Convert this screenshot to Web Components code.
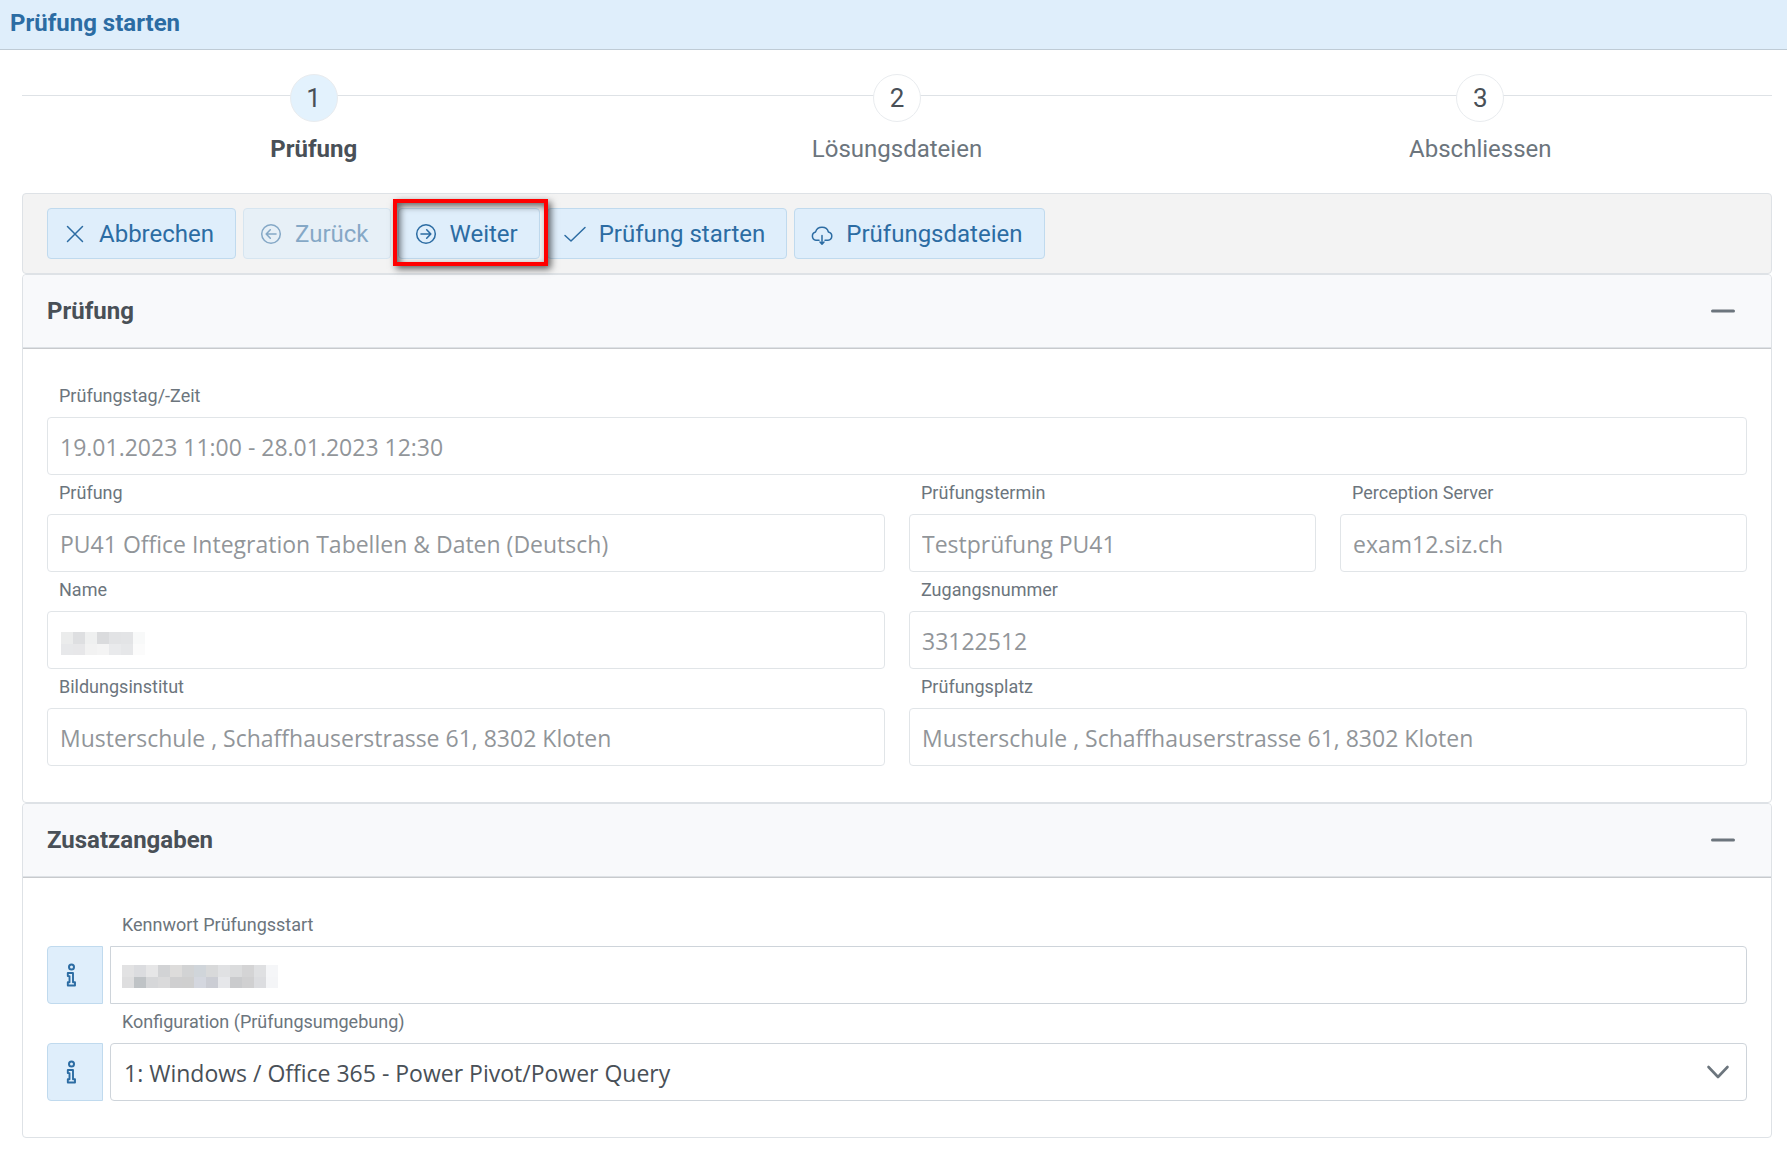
<!DOCTYPE html>
<html lang="de">
<head>
<meta charset="utf-8">
<meta name="viewport" content="width=device-width, initial-scale=1">
<title>Prüfung starten</title>
<style>
  body {
    margin: 0;
    background: #fff;
    color: #495057;
    font: 24px/28px Roboto, "Liberation Sans", sans-serif;
    --primary: #2c6ca3;
    --primary-bg: #dfeefb;
    --primary-border: #c0daee;
    --line: #dee2e6;
    --muted: #6c757d;
    --input-font: "Open Sans", "Noto Sans", sans-serif;
  }
</style>
</head>
<body>
<exam-page></exam-page>

<script>
const define = (name, html, setup) => {
  const template = document.createElement('template');
  template.innerHTML = html;
  customElements.define(name, class extends HTMLElement {
    connectedCallback() {
      if (this.shadowRoot) return;
      this.attachShadow({ mode: 'open' }).append(template.content.cloneNode(true));
      if (setup) setup(this, this.shadowRoot);
    }
  });
};

const ICONS = {
  times: '<path d="M4.500 4.500 19.500 19.500M19.500 4.500 4.500 19.500" stroke-width="1.500"/>',
  left: '<circle cx="12" cy="12" r="9.300" stroke-width="1.500"/><path d="M17 12H7.500M11.300 7.800 7.200 12l4.100 4.200" stroke-width="1.600"/>',
  right: '<circle cx="12" cy="12" r="9.300" stroke-width="1.500"/><path d="M7 12h9.500M12.700 7.800l4.100 4.200-4.100 4.200" stroke-width="1.600"/>',
  check: '<path d="M2 13.500 8 19 22 5.500" stroke-width="1.500"/>',
  cloud: '<path d="M9 18.300H6A4.300 4.300 0 0 1 5.600 9.900 6.600 6.200 0 0 1 18.400 10 4.200 4.200 0 0 1 18 18.300H15" stroke-width="1.500"/><path d="M12 13.500v8.500M10 20l2 2.200 2-2.200" stroke-width="1.500"/>',
  info: '<circle cx="12.500" cy="4" r="2.500" stroke-width="2"/><path d="M8.800 10h5.200v9.300h2v3.200H8.800v-3.200h1.700v-6.200h-1.700z" stroke-width="1.900"/>',
  minus: '<path d="M1.500 12H22.500" stroke-width="3"/>',
  down: '<path d="M2.500 7 12 17 21.500 7" stroke-width="2.600"/>'
};

define('exam-icon', `
  <style>
    :host { display: block; flex: none; width: 24px; height: 24px; }
    svg { display: block; width: 100%; height: 100%; fill: none; stroke: currentColor; stroke-linecap: round; stroke-linejoin: round; }
  </style>
  <svg viewBox="0 0 24 24" aria-hidden="true"></svg>`,
  (host, root) => { root.querySelector('svg').innerHTML = ICONS[host.getAttribute('name')]; });

define('exam-button', `
  <style>
    :host { display: block; position: relative; }
    button {
      display: flex; align-items: center; gap: 12px; height: 51px; padding: 0 21px 0 15px;
      border: 1px solid var(--primary-border); border-radius: 4px;
      background: var(--primary-bg); color: var(--primary); font: inherit; white-space: nowrap; cursor: pointer;
    }
    button:disabled { opacity: .55; cursor: default; }
    :host([highlight]) { z-index: 1; }
    :host([highlight])::after {
      content: ""; position: absolute; inset: -9px -8px -7px -5px; border: 4px solid #f00; pointer-events: none;
      box-shadow: 3px 3px 7px rgba(0, 0, 0, .6), inset 3px 3px 7px rgba(0, 0, 0, .6);
    }
  </style>
  <button type="button"><span class="icon"></span><span><slot></slot></span></button>`,
  (host, root) => {
    root.querySelector('.icon').innerHTML = `<exam-icon name="${host.getAttribute('icon')}"></exam-icon>`;
    root.querySelector('button').disabled = host.hasAttribute('disabled');
  });

define('exam-step', `
  <style>
    :host { display: block; flex: 1; }
    a { display: flex; flex-direction: column; align-items: center; gap: 13px; color: var(--muted); text-decoration: none; }
    .number {
      display: flex; align-items: center; justify-content: center; box-sizing: border-box; width: 48px; height: 48px;
      border: 1px solid #e9ecef; border-radius: 50%; background: #fff; color: #495057; font-size: 26px;
    }
    :host([active]) .number { background: #e3f2fd; }
    :host([active]) .label { color: #495057; font-weight: 700; }
  </style>
  <a href="#"><span class="number"></span><span class="label"><slot></slot></span></a>`,
  (host, root) => {
    root.querySelector('.number').textContent = host.getAttribute('number');
    if (host.hasAttribute('active')) root.querySelector('a').setAttribute('aria-current', 'step');
  });

define('exam-steps', `
  <style>
    :host {
      display: flex;
      background: linear-gradient(var(--line), var(--line)) 0 21px / 100% 1px no-repeat;
    }
  </style>
  <slot></slot>`);

define('exam-toolbar', `
  <style>
    :host {
      display: flex; flex-wrap: wrap; gap: 7px; padding: 14px 24px;
      border: 1px solid var(--line); border-radius: 4px; background: #f3f3f3;
    }
  </style>
  <slot></slot>`);

define('exam-panel', `
  <style>
    :host { display: block; border: 1px solid var(--line); border-radius: 4px; }
    header {
      display: flex; align-items: center; justify-content: space-between; height: 72px; padding: 0 36px 0 24px;
      border-bottom: 1px solid var(--line); border-radius: 4px 4px 0 0; background: #f8f9fb;
    }
    h2 { margin: 0; font-size: inherit; font-weight: 700; }
    button { padding: 0; border: 0; background: none; color: var(--muted); cursor: pointer; }
    .body {
      display: grid; grid-template-columns: repeat(4, minmax(0, 1fr)); column-gap: 24px;
      padding: 29px 24px 36px; border-top: 1px solid #c8cacd;
    }
  </style>
  <header><h2></h2><button type="button" aria-label="Einklappen"><exam-icon name="minus"></exam-icon></button></header>
  <div class="body"><slot></slot></div>`,
  (host, root) => { root.querySelector('h2').textContent = host.getAttribute('heading'); });

/* Masked values are drawn as two rows of 12px tiles over the control. */
const mosaic = rows => `<svg class="mosaic" width="${rows[0].length * 12}" height="23" aria-hidden="true">` +
  rows.map((row, y) => row.map((c, x) =>
    `<rect x="${x * 12}" y="${y * 12}" width="12" height="${y ? 11 : 12}" fill="#${c}"/>`).join('')).join('') + '</svg>';
const MASKS = {
  name: [['ebecec', 'dedfe1', 'eff0f0', 'dadbdd', 'e2e3e5', 'e3e4e6', 'f8f9f9'],
         ['e7e8ea', 'e7e7e9', 'f2f2f2', 'f4f4f4', 'e9eaec', 'e6e7e9', 'fbfbfb']],
  code: [['e2e2e3', 'dbdcdf', 'e6e6e7', 'd2d3d5', 'dddcdb', 'd2d3d4', 'd0d5da', 'd8d9da', 'e0e1e3', 'dbdcdd', 'd4d4d5', 'dfe0e2', 'f5f6f8'],
         ['dededf', 'bfc3c6', 'd6d7d9', 'dadadb', 'cfcfd0', 'cfcfcf', 'd4d7df', 'cbcdd4', 'e6e7ea', 'cacbcd', 'd0d0d1', 'dcdde0', 'f4f5f7']]
};

define('exam-field', `
  <style>
    :host { display: grid; grid-template-columns: minmax(0, 1fr); align-content: start; }
    :host([span="2"]) { grid-column: span 2; }
    :host([span="4"]) { grid-column: span 4; }
    :host([info]) { grid-template-columns: 56px minmax(0, 1fr); column-gap: 7px; }
    label { grid-column: -2; height: 39px; padding-left: 12px; font-size: 18px; line-height: 36px; color: var(--muted); }
    .control { grid-column: -2; position: relative; }
    input, select {
      display: block; box-sizing: border-box; width: 100%; height: 58px; padding: 2px 12px 0; margin: 0;
      border: 1px solid #ced4da; border-radius: 4px; background: #fff; color: #495057;
      font: 23px/32px var(--input-font); appearance: none; outline: 0;
    }
    select { padding: 2px 48px 0 13px; }
    input:disabled { opacity: .6; }
    :host([info]) input { border-radius: 0 4px 4px 0; }
    .info {
      height: 58px; padding: 0 0 0 11px; border: 1px solid var(--primary-border); border-radius: 4px 0 0 4px;
      background: var(--primary-bg); color: var(--primary); cursor: pointer;
    }
    .mosaic { position: absolute; left: 14px; top: 21px; }
    :host([info]) .mosaic { left: 12px; top: 19px; }
    .arrow { position: absolute; right: 17px; top: 17px; color: var(--muted); pointer-events: none; }
  </style>
  <label for="control"></label>`,
  (host, root) => {
    const attr = name => host.getAttribute(name) || '';
    root.querySelector('label').textContent = attr('label');
    const control = host.hasAttribute('select')
      ? `<select id="control"><option>${attr('value')}</option></select><exam-icon class="arrow" name="down"></exam-icon>`
      : `<input id="control" type="text" value="${attr('value')}"${host.hasAttribute('disabled') ? ' disabled' : ''}>`;
    const info = host.hasAttribute('info')
      ? '<button class="info" type="button" aria-label="Information"><exam-icon name="info"></exam-icon></button>' : '';
    const mask = host.hasAttribute('mask') ? mosaic(MASKS[attr('mask')]) : '';
    const part = document.createElement('template');
    part.innerHTML = `${info}<div class="control">${control}${mask}</div>`;
    root.append(part.content);
  });

define('exam-page', `
  <style>
    :host { display: block; }
    .title {
      box-sizing: border-box; height: 50px; padding: 9px 10px; border-bottom: 1px solid #bfcbd5;
      background: var(--primary-bg); color: var(--primary);
    }
    h1 { margin: 0; font-size: inherit; font-weight: 700; }
    main { padding: 24px 15px 15px 22px; }
    exam-steps { margin-bottom: 30px; }
  </style>
  <div class="title"><h1>Prüfung starten</h1></div>
  <main>
    <exam-steps>
      <exam-step number="1" active>Prüfung</exam-step>
      <exam-step number="2">Lösungsdateien</exam-step>
      <exam-step number="3">Abschliessen</exam-step>
    </exam-steps>
    <exam-toolbar>
      <exam-button icon="times">Abbrechen</exam-button>
      <exam-button icon="left" disabled>Zurück</exam-button>
      <exam-button icon="right" highlight>Weiter</exam-button>
      <exam-button icon="check">Prüfung starten</exam-button>
      <exam-button icon="cloud">Prüfungsdateien</exam-button>
    </exam-toolbar>
    <exam-panel heading="Prüfung">
      <exam-field span="4" label="Prüfungstag/-Zeit" value="19.01.2023 11:00 - 28.01.2023 12:30" disabled></exam-field>
      <exam-field span="2" label="Prüfung" value="PU41 Office Integration Tabellen &amp; Daten (Deutsch)" disabled></exam-field>
      <exam-field label="Prüfungstermin" value="Testprüfung PU41" disabled></exam-field>
      <exam-field label="Perception Server" value="exam12.siz.ch" disabled></exam-field>
      <exam-field span="2" label="Name" mask="name" disabled></exam-field>
      <exam-field span="2" label="Zugangsnummer" value="33122512" disabled></exam-field>
      <exam-field span="2" label="Bildungsinstitut" value="Musterschule , Schaffhauserstrasse 61, 8302 Kloten" disabled></exam-field>
      <exam-field span="2" label="Prüfungsplatz" value="Musterschule , Schaffhauserstrasse 61, 8302 Kloten" disabled></exam-field>
    </exam-panel>
    <exam-panel heading="Zusatzangaben">
      <exam-field span="4" info label="Kennwort Prüfungsstart" mask="code"></exam-field>
      <exam-field span="4" info select label="Konfiguration (Prüfungsumgebung)" value="1: Windows / Office 365 - Power Pivot/Power Query"></exam-field>
    </exam-panel>
  </main>
</exam-page>`);
</script>
</body>
</html>
